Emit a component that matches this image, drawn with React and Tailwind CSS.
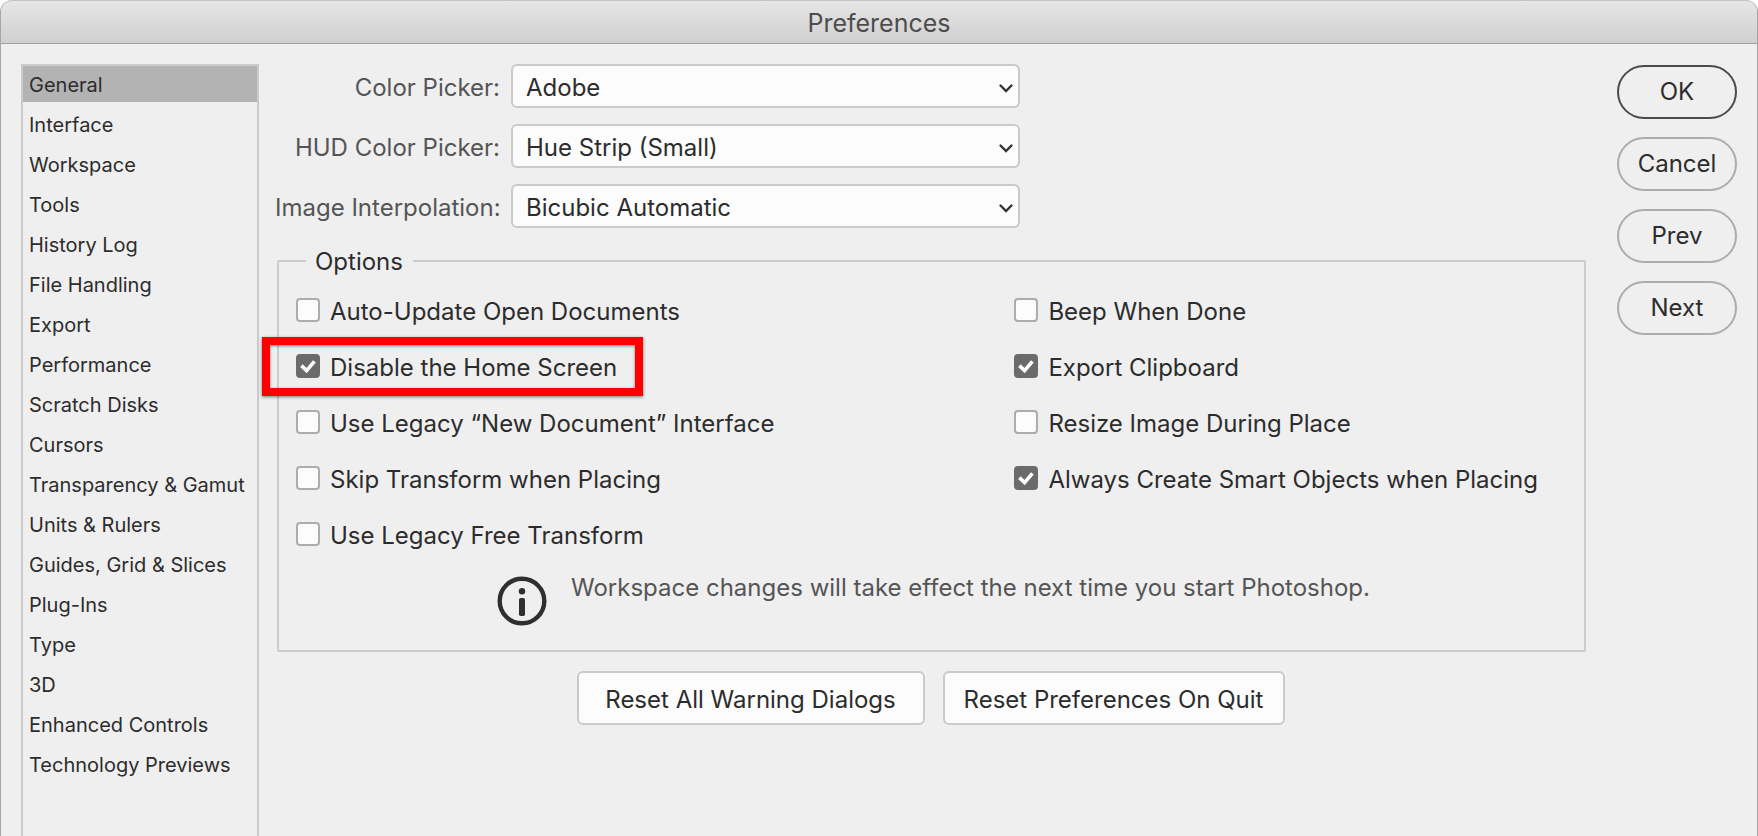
import React, { useState } from "react";

const SECTIONS = [
  "General",
  "Interface",
  "Workspace",
  "Tools",
  "History Log",
  "File Handling",
  "Export",
  "Performance",
  "Scratch Disks",
  "Cursors",
  "Transparency & Gamut",
  "Units & Rulers",
  "Guides, Grid & Slices",
  "Plug-Ins",
  "Type",
  "3D",
  "Enhanced Controls",
  "Technology Previews",
];

const PICKERS = [
  { id: "color-picker", label: "Color Picker:", options: ["Adobe", "Apple"] },
  {
    id: "hud-picker",
    label: "HUD Color Picker:",
    options: ["Hue Strip (Small)", "Hue Strip (Medium)", "Hue Wheel"],
  },
  {
    id: "interpolation",
    label: "Image Interpolation:",
    options: ["Bicubic Automatic", "Bilinear", "Nearest Neighbor"],
  },
];

// listed row by row, left column first
const OPTIONS = [
  { id: "auto-update", label: "Auto-Update Open Documents" },
  { id: "beep", label: "Beep When Done" },
  {
    id: "home-screen",
    label: "Disable the Home Screen",
    checked: true,
    highlight: true,
  },
  { id: "clipboard", label: "Export Clipboard", checked: true },
  { id: "legacy-new", label: "Use Legacy “New Document” Interface" },
  { id: "resize", label: "Resize Image During Place" },
  { id: "skip-transform", label: "Skip Transform when Placing" },
  {
    id: "smart-objects",
    label: "Always Create Smart Objects when Placing",
    checked: true,
  },
  { id: "legacy-transform", label: "Use Legacy Free Transform" },
];

const Picker = ({ id, label, options }) => (
  <div className="flex items-center gap-[11px]">
    <label
      htmlFor={id}
      className="w-[225px] shrink-0 pt-1 text-right whitespace-nowrap text-[#555555]"
    >
      {label}
    </label>
    <div className="relative w-full max-w-[509px]">
      <select
        id={id}
        className="block h-11 w-full appearance-none rounded-md border-2 border-[#cacaca] bg-[#fcfcfc] pt-1 pr-10 pl-[13px] outline-none"
      >
        {options.map((o) => (
          <option key={o}>{o}</option>
        ))}
      </select>
      <svg
        className="pointer-events-none absolute top-[19px] right-1.5 h-2.5 w-4"
        viewBox="0 0 16 10"
        fill="none"
        stroke="#333333"
        strokeWidth="2.4"
        strokeLinecap="round"
      >
        <path d="M2.5 2.5 L8 8 L13.5 2.5" />
      </svg>
    </div>
  </div>
);

const Option = ({ id, label, checked, highlight }) => {
  const [on, setOn] = useState(Boolean(checked));

  return (
    <div className="flex h-14 items-center">
      <div className="relative flex items-center gap-2.5">
        <span className="relative block h-6 w-6 shrink-0">
          <input
            id={id}
            type="checkbox"
            checked={on}
            onChange={(e) => setOn(e.target.checked)}
            className="block h-6 w-6 appearance-none rounded border-2 border-[#acacac] bg-[#fcfcfc] checked:border-[#6b6b6b] checked:bg-[#6b6b6b]"
          />
          {on && (
            <svg
              className="pointer-events-none absolute inset-0 h-6 w-6"
              viewBox="0 0 24 24"
              fill="none"
              stroke="#ffffff"
              strokeWidth="3.6"
            >
              <path d="M5.4 11.6 L10.6 16.6 L18.4 7.4" />
            </svg>
          )}
        </span>
        <label htmlFor={id} className="pt-1 whitespace-nowrap">
          {label}
        </label>
        {highlight && (
          <span className="pointer-events-none absolute -top-[13px] -right-[26px] -bottom-3.5 -left-[34px] border-8 border-[#ff0000] shadow-[0_1px_3px_rgba(0,0,0,0.5),inset_0_1px_3px_rgba(0,0,0,0.5)]" />
        )}
      </div>
    </div>
  );
};

const DialogButton = ({ children, primary }) => (
  <button
    type="button"
    className={`h-[54px] w-[120px] rounded-full border-2 ${
      primary ? "border-[#4b4b4b]" : "border-[#acacac]"
    }`}
  >
    {children}
  </button>
);

const App = () => {
  const [section, setSection] = useState("General");

  return (
    <div className="flex min-h-screen flex-col rounded-t-xl border-x border-[#a6a6a6] bg-[#efefef] font-['Inter',sans-serif] text-[24px] leading-7 text-[#2c2c2c]">
      <header className="flex h-11 items-center justify-center rounded-t-xl border-t border-b border-t-[#c4c4c4] border-b-[#a0a0a0] bg-linear-to-b from-[#e6e6e6] to-[#d0d0d0]">
        <h1 className="pt-0.5 text-[25px] text-[#4d4d4d]">Preferences</h1>
      </header>

      <div className="flex flex-1 pt-5 pr-5 pl-5">
        <nav className="flex w-[238px] shrink-0 flex-col gap-1 border-2 border-b-0 border-[#cacaca] text-[20px]">
          {SECTIONS.map((name) => (
            <button
              key={name}
              type="button"
              onClick={() => setSection(name)}
              className={`h-9 pt-0.5 pl-1.5 text-left whitespace-nowrap ${
                section === name ? "bg-[#b3b3b3]" : ""
              }`}
            >
              {name}
            </button>
          ))}
        </nav>

        <main className="ml-4 flex min-w-0 flex-1 flex-col">
          <div className="flex flex-col gap-4">
            {PICKERS.map((p) => (
              <Picker key={p.id} {...p} />
            ))}
          </div>

          <fieldset className="mt-[18px] ml-0.5 rounded-xs border-2 border-[#cccccc] px-[17px] pb-6">
            <legend className="ml-2.5 pt-0.5 pr-2.5 pl-[9px]">Options</legend>
            <div className="grid grid-cols-[13fr_10fr] pt-1.5">
              {OPTIONS.map((o) => (
                <Option key={o.id} {...o} />
              ))}
            </div>
            <div className="mt-3.5 flex justify-center gap-6 pl-1">
              <svg
                className="h-[50px] w-[50px] shrink-0"
                viewBox="0 0 50 50"
                fill="none"
                stroke="#2f2f2f"
              >
                <circle cx="25" cy="25" r="22.3" strokeWidth="4.4" />
                <circle cx="25" cy="15.3" r="3.2" fill="#2f2f2f" stroke="none" />
                <rect
                  x="22"
                  y="22"
                  width="6"
                  height="18"
                  rx="1.8"
                  fill="#2f2f2f"
                  stroke="none"
                />
              </svg>
              <p className="leading-6 text-[#555555]">
                Workspace changes will take effect the next time you start
                Photoshop.
              </p>
            </div>
          </fieldset>

          <div className="mt-[19px] flex justify-center gap-[18px]">
            <button
              type="button"
              className="h-[54px] w-[348px] rounded-md border-2 border-[#cacaca] bg-[#fcfcfc] pt-1"
            >
              Reset All Warning Dialogs
            </button>
            <button
              type="button"
              className="h-[54px] w-[342px] rounded-md border-2 border-[#cacaca] bg-[#fcfcfc] pt-1"
            >
              Reset Preferences On Quit
            </button>
          </div>
        </main>

        <div className="ml-[31px] flex flex-col gap-[18px] pt-px">
          <DialogButton primary>OK</DialogButton>
          <DialogButton>Cancel</DialogButton>
          <DialogButton>Prev</DialogButton>
          <DialogButton>Next</DialogButton>
        </div>
      </div>
    </div>
  );
};

export default App;
